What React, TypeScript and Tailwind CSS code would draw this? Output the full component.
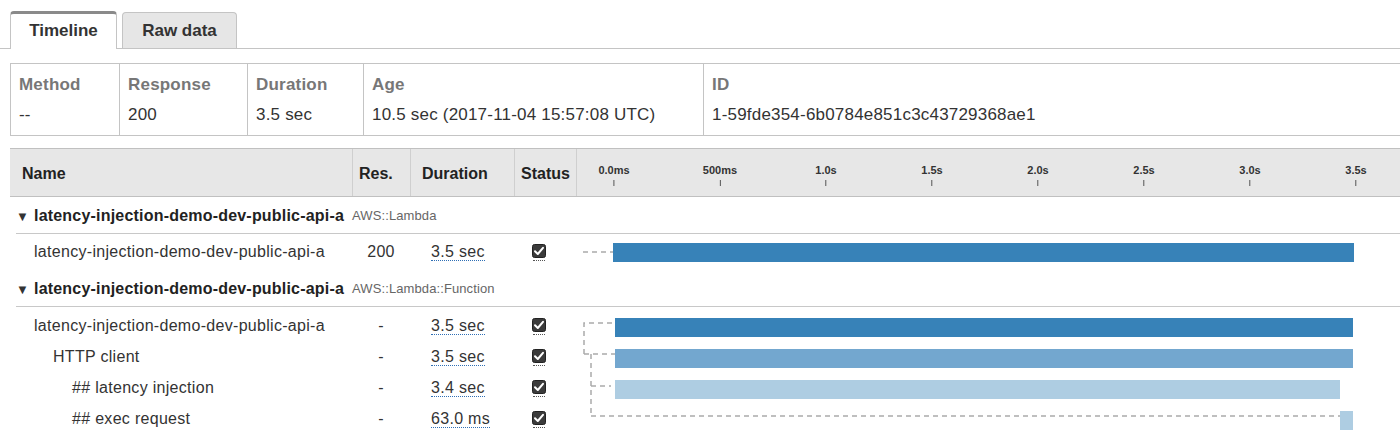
import { ReactNode } from 'react';

const font = "font-['Liberation_Sans','Helvetica_Neue',Arial,sans-serif]";

const PX_PER_SEC = 212;
const ORIGIN = 37;

const ticks = ['0.0ms', '500ms', '1.0s', '1.5s', '2.0s', '2.5s', '3.0s', '3.5s'];

const summary = [
  { label: 'Method', value: '--', w: 'w-[108px]' },
  { label: 'Response', value: '200', w: 'w-[128px]' },
  { label: 'Duration', value: '3.5 sec', w: 'w-[116px]' },
  { label: 'Age', value: '10.5 sec (2017-11-04 15:57:08 UTC)', w: 'w-[340px]' },
  { label: 'ID', value: '1-59fde354-6b0784e851c3c43729368ae1', w: 'flex-1' },
];

const Check = () => (
  <span className="inline-flex flex-col items-center">
    <svg width="14" height="14" viewBox="0 0 14 14">
      <rect x="0.5" y="0.5" width="13" height="13" rx="2" fill="#3b3b3b" stroke="#222" />
      <path d="M3 7.2 L5.8 10 L11 3.8" stroke="#fff" strokeWidth="2" fill="none" strokeLinecap="round" strokeLinejoin="round" />
    </svg>
    <span className="mt-[2px] w-[12px] border-b border-dotted border-[#555]" />
  </span>
);

const Dur = ({ children }: { children: ReactNode }) => (
  <span className="border-b border-dotted border-[#2f6fb5] leading-[17px]">{children}</span>
);

type Row = { name: string; indent: string; res: string; dur: string };

const SpanRow = ({ row, h }: { row: Row; h: string }) => (
  <div className={`grid grid-cols-[342px_58px_104px_62px] items-center ${h} text-[16px] tracking-[0.3px] text-[#333]`}>
    <div className={`${row.indent} whitespace-nowrap`}>{row.name}</div>
    <div className="text-center">{row.res}</div>
    <div className="pl-[21px]">
      <Dur>{row.dur}</Dur>
    </div>
    <div className="pl-[18px] pt-[2px]">
      <Check />
    </div>
  </div>
);

const GroupHeader = ({ name, type }: { name: string; type: string }) => (
  <div className="ml-[6px] flex h-[37px] items-center border-b border-[#c8c8c8] pt-[2px]">
    <span className="w-[18px] text-[13px] leading-none text-[#333]">▼</span>
    <span className="text-[16px] font-bold tracking-[0.2px] text-[#222]">{name}</span>
    <span className="ml-[8px] text-[13px] tracking-[0.1px] text-[#666]">{type}</span>
  </div>
);

const dash = { stroke: '#aaa', strokeWidth: 1.5, strokeDasharray: '5 4', fill: 'none' };

const Group1Chart = () => (
  <svg width="824" height="36" className="block">
    <line x1="7" y1="18" x2="37" y2="18" {...dash} />
    <rect x={ORIGIN} y="9" width={3.5 * PX_PER_SEC - 1} height="19" fill="#3782b8" />
  </svg>
);

const Group2Chart = () => (
  <svg width="824" height="130" className="block">
    <path d="M8 47 V16 H39" {...dash} />
    <path d="M8 47 H39" {...dash} />
    <path d="M15 47 V109" {...dash} />
    <path d="M15 79 H35" {...dash} />
    <path d="M15 109 H764" {...dash} />
    <rect x="39" y="11" width="738" height="19" fill="#3782b8" />
    <rect x="39" y="42" width="738" height="19" fill="#73a7cf" />
    <rect x="39" y="73" width="725" height="19" fill="#aecde2" />
    <rect x="764" y="104" width="13" height="19" fill="#aecde2" />
  </svg>
);

const group2Rows: Row[] = [
  { name: 'latency-injection-demo-dev-public-api-a', indent: 'pl-[24px]', res: '-', dur: '3.5 sec' },
  { name: 'HTTP client', indent: 'pl-[43px]', res: '-', dur: '3.5 sec' },
  { name: '## latency injection', indent: 'pl-[62px]', res: '-', dur: '3.4 sec' },
  { name: '## exec request', indent: 'pl-[62px]', res: '-', dur: '63.0 ms' },
];

export default function App() {
  return (
    <div className={`${font} h-[448px] w-[1400px] overflow-hidden bg-white`}>
      {/* tabs */}
      <div className="flex h-[49px] items-end gap-[5px] border-b border-[#c4c4c4] pl-[10px]">
        <div className="-mb-px flex h-[38px] w-[107px] items-center justify-center rounded-t-[4px] border border-b-0 border-[#c4c4c4] border-t-[3px] border-t-[#8a8a8a] bg-white pb-[1px] text-[17px] font-bold text-[#333]">
          Timeline
        </div>
        <div className="flex h-[36px] w-[115px] items-center justify-center rounded-t-[4px] border border-b-0 border-[#c4c4c4] bg-[#e6e6e6] text-[17px] font-bold text-[#333]">
          Raw data
        </div>
      </div>

      {/* summary */}
      <div className="ml-[10px] mt-[14px] flex h-[73px] border-y border-l border-[#c4c4c4]">
        {summary.map((s, i) => (
          <div key={s.label} className={`${s.w} ${i > 0 ? 'border-l border-[#c4c4c4]' : ''} px-[8px] pt-[10px]`}>
            <div className="text-[17px] font-bold leading-[22px] tracking-[0.2px] text-[#777]">{s.label}</div>
            <div className="mt-[9px] whitespace-nowrap text-[17px] leading-[20px] tracking-[0.2px] text-[#333]">{s.value}</div>
          </div>
        ))}
      </div>

      {/* timeline table */}
      <div className="ml-[10px] mt-[12px]">
        <div className="grid h-[49px] grid-cols-[342px_58px_104px_62px_1fr] border-y border-[#c0c0c0] bg-[#e7e7e7] text-[16px] font-bold text-[#222]">
          <div className="flex items-center pl-[12px] pt-[2px]">Name</div>
          <div className="flex items-center border-l border-[#cfcfcf] pl-[6px] pt-[2px]">Res.</div>
          <div className="flex items-center border-l border-[#cfcfcf] pl-[11px] pt-[2px]">Duration</div>
          <div className="flex items-center border-l border-[#cfcfcf] pl-[6px] pt-[2px]">Status</div>
          <div className="relative border-l border-[#cfcfcf]">
            {ticks.map((t, i) => (
              <div
                key={t}
                className="absolute top-[15px] flex -translate-x-1/2 flex-col items-center"
                style={{ left: ORIGIN + i * (PX_PER_SEC / 2) }}
              >
                <span className="text-[11px] font-bold leading-[13px] text-[#333]">{t}</span>
                <span className="mt-[3px] h-[6px] w-px bg-[#555]" />
              </div>
            ))}
          </div>
        </div>

        <GroupHeader name="latency-injection-demo-dev-public-api-a" type="AWS::Lambda" />
        <div className="flex">
          <SpanRow
            h="h-[36px]"
            row={{ name: 'latency-injection-demo-dev-public-api-a', indent: 'pl-[24px]', res: '200', dur: '3.5 sec' }}
          />
          <Group1Chart />
        </div>

        <GroupHeader name="latency-injection-demo-dev-public-api-a" type="AWS::Lambda::Function" />
        <div className="flex">
          <div className="pt-[3px]">
            {group2Rows.map((r) => (
              <SpanRow key={r.name} row={r} h="h-[31px]" />
            ))}
          </div>
          <Group2Chart />
        </div>
      </div>
    </div>
  );
}
